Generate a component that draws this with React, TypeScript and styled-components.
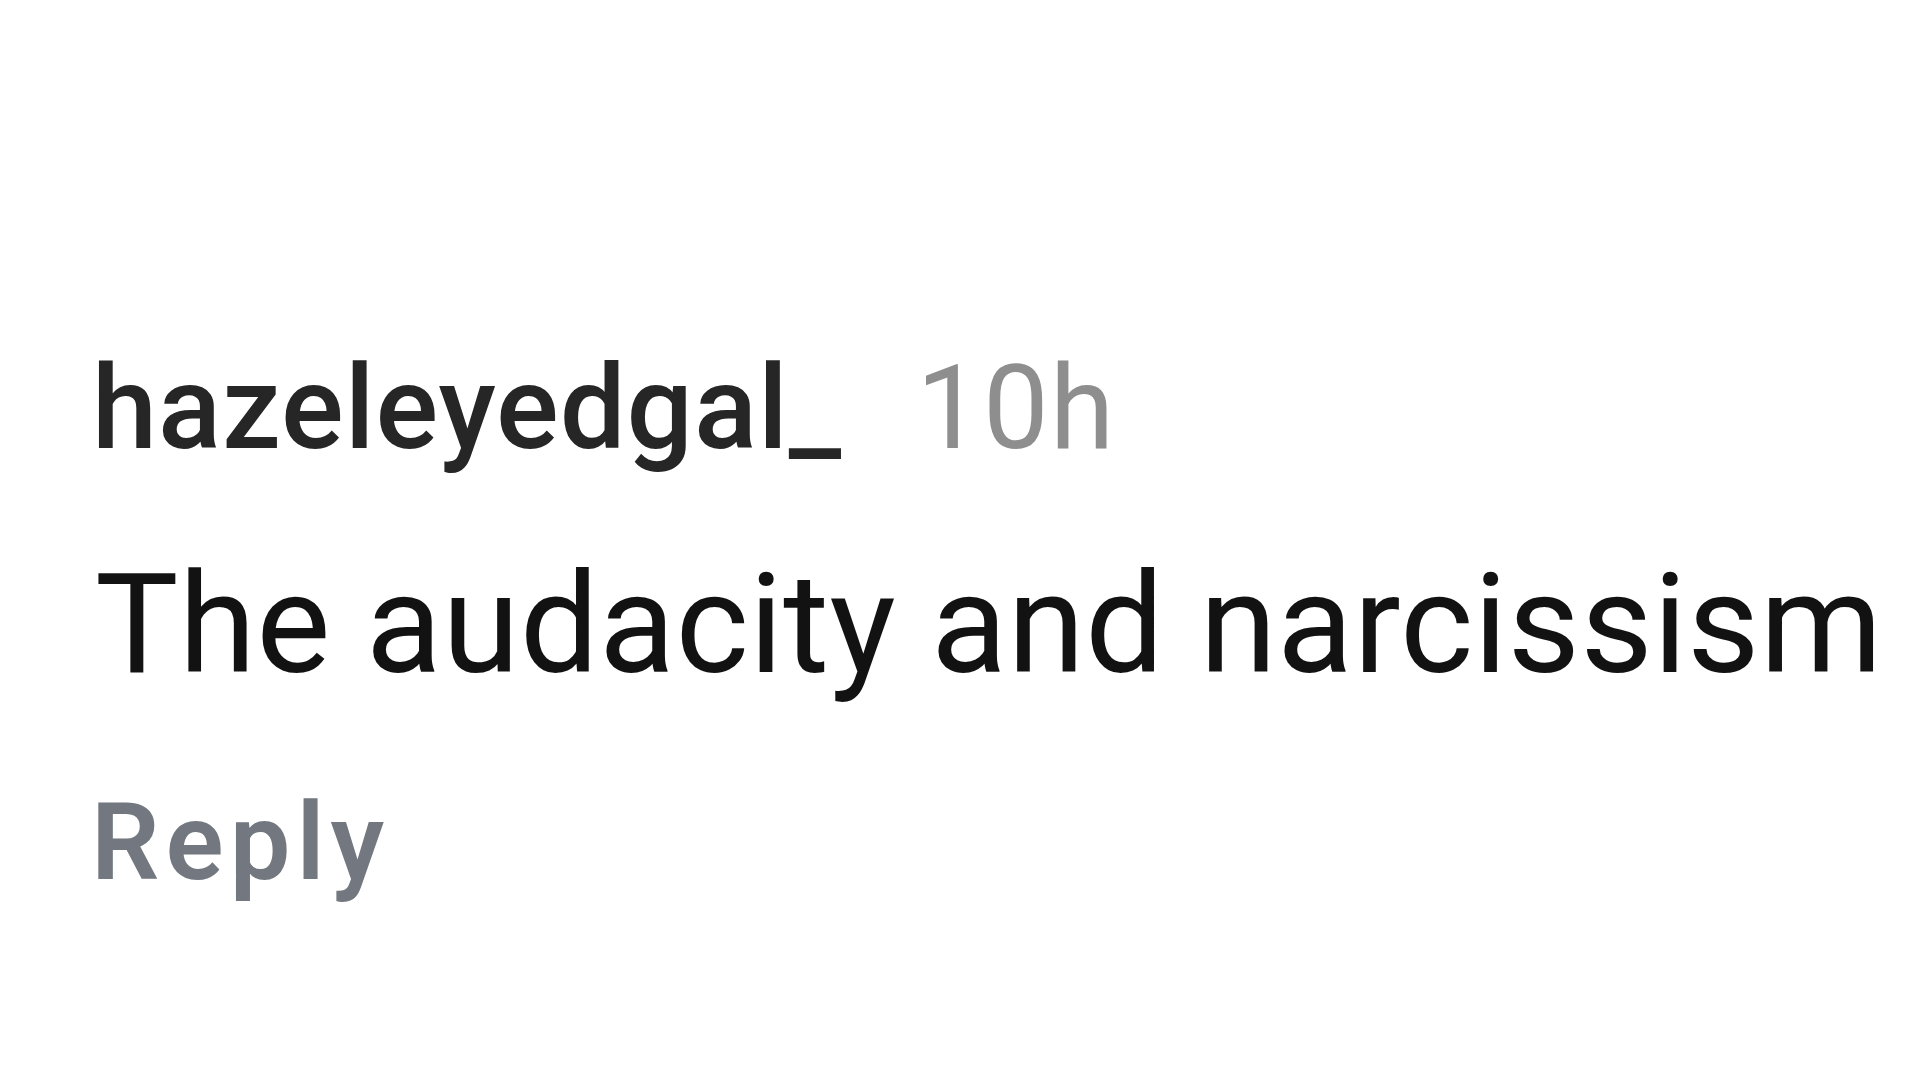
import React from "react";
import styled, { createGlobalStyle } from "styled-components";

const GlobalStyle = createGlobalStyle`
  html, body {
    margin: 0;
    padding: 0;
    background: #ffffff;
  }
  body {
    font-family: Roboto, "Noto Sans", "Liberation Sans", sans-serif;
  }
`;

interface CommentProps {
  username: string;
  time: string;
  text: string;
}

const Comment = ({ username, time, text }: CommentProps) => {
  return (
    <Container>
      <Header>
        <Username>{username}</Username>
        <Time>{time}</Time>
      </Header>
      <Body>{text}</Body>
      <ReplyButton>Reply</ReplyButton>
    </Container>
  );
};

const App = () => (
  <>
    <GlobalStyle />
    <Page>
      <Comment
        username="hazeleyedgal_"
        time="10h"
        text="The audacity and narcissism"
      />
    </Page>
  </>
);

const Page = styled.div`
  width: 1920px;
  height: 1080px;
  overflow: hidden;
  background: #ffffff;
  padding: 350px 0 0 95px;
  box-sizing: border-box;
`;

const Container = styled.div`
  display: flex;
  flex-direction: column;
  align-items: flex-start;
`;

const Header = styled.div`
  display: flex;
  align-items: baseline;
  gap: 74px;
  height: 117px;
  margin-left: -3px;
`;

const Username = styled.span`
  font-size: 117px;
  line-height: 117px;
  font-weight: 500;
  color: #262626;
  letter-spacing: 1px;
`;

const Time = styled.span`
  font-size: 117px;
  line-height: 117px;
  font-weight: 400;
  color: #8e8e8e;
  letter-spacing: 1px;
`;

const Body = styled.p`
  margin: 87px 0 0;
  font-size: 140px;
  line-height: 140px;
  font-weight: 400;
  color: #121212;
  letter-spacing: 0.3px;
  white-space: nowrap;
`;

const ReplyButton = styled.button`
  margin: 94px 0 0 -4px;
  padding: 0;
  border: none;
  background: none;
  font-family: inherit;
  font-size: 108px;
  line-height: 108px;
  font-weight: 600;
  color: #737880;
  letter-spacing: 6px;
  cursor: pointer;
`;

export default App;
